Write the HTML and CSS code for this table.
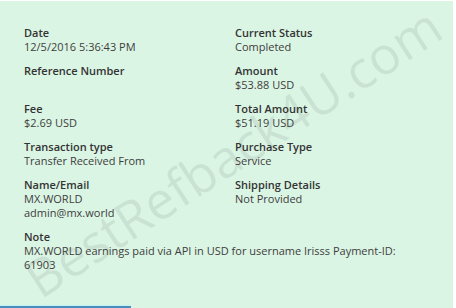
FILE: index.html
```html
<!DOCTYPE html>
<html>
<head>
<meta charset="utf-8">
<link rel="stylesheet" href="styles.css">
</head>
<body>
<div class="panel">
  <div class="grid">
    <div class="field"><div class="label">Date</div><div class="value">12/5/2016 5:36:43 PM</div></div>
    <div class="field"><div class="label">Current Status</div><div class="value">Completed</div></div>
    <div class="field"><div class="label">Reference Number</div><div class="value">&nbsp;</div></div>
    <div class="field"><div class="label">Amount</div><div class="value">$53.88 USD</div></div>
    <div class="field"><div class="label">Fee</div><div class="value">$2.69 USD</div></div>
    <div class="field"><div class="label">Total Amount</div><div class="value">$51.19 USD</div></div>
    <div class="field"><div class="label">Transaction type</div><div class="value">Transfer Received From</div></div>
    <div class="field"><div class="label">Purchase Type</div><div class="value">Service</div></div>
    <div class="field"><div class="label">Name/Email</div><div class="value">MX.WORLD</div><div class="value">admin@mx.world</div></div>
    <div class="field"><div class="label">Shipping Details</div><div class="value">Not Provided</div></div>
    <div class="field note"><div class="label">Note</div><div class="value">MX.WORLD earnings paid via API in USD for username Irisss Payment-ID: 61903</div></div>
  </div>
  <div class="watermark">BestRefback4U.com</div>
</div>
<div class="footer"><div class="tab"></div><div class="rest"></div></div>
</body>
</html>
```
FILE: styles.css
```css
html, body { margin: 0; padding: 0; background: #ffffff; }
body { width: 456px; height: 308px; overflow: hidden; font-family: "Open Sans", "DejaVu Sans", sans-serif; }
.panel {
  position: relative;
  margin-top: 1px;
  width: 453px;
  height: 304px;
  background: #dbf5e4;
  box-sizing: border-box;
  padding: 25px 24px 0 24px;
  overflow: hidden;
}
.grid {
  position: relative;
  z-index: 1;
  display: grid;
  grid-template-columns: 211px 1fr;
  row-gap: 10px;
}
.field { font-size: 11px; line-height: 14px; color: #3a3a3a; }
.label { font-weight: 600; color: #333; }
.value { color: #3d3d3d; }
.note { grid-column: 1 / 3; }
.watermark {
  position: absolute;
  left: 44px;
  top: 252px;
  font-size: 52px;
  line-height: 52px;
  color: rgba(0, 0, 0, 0.075);
  transform: rotate(-33deg);
  transform-origin: left bottom;
  white-space: nowrap;
  pointer-events: none;
}
.footer { display: flex; width: 453px; height: 3px; }
.tab { width: 131px; height: 2px; border-top: 1px solid #c4f2f2; background: #4a8dbf; }
.rest { flex: 1; background: #dbf5e4; }
```
